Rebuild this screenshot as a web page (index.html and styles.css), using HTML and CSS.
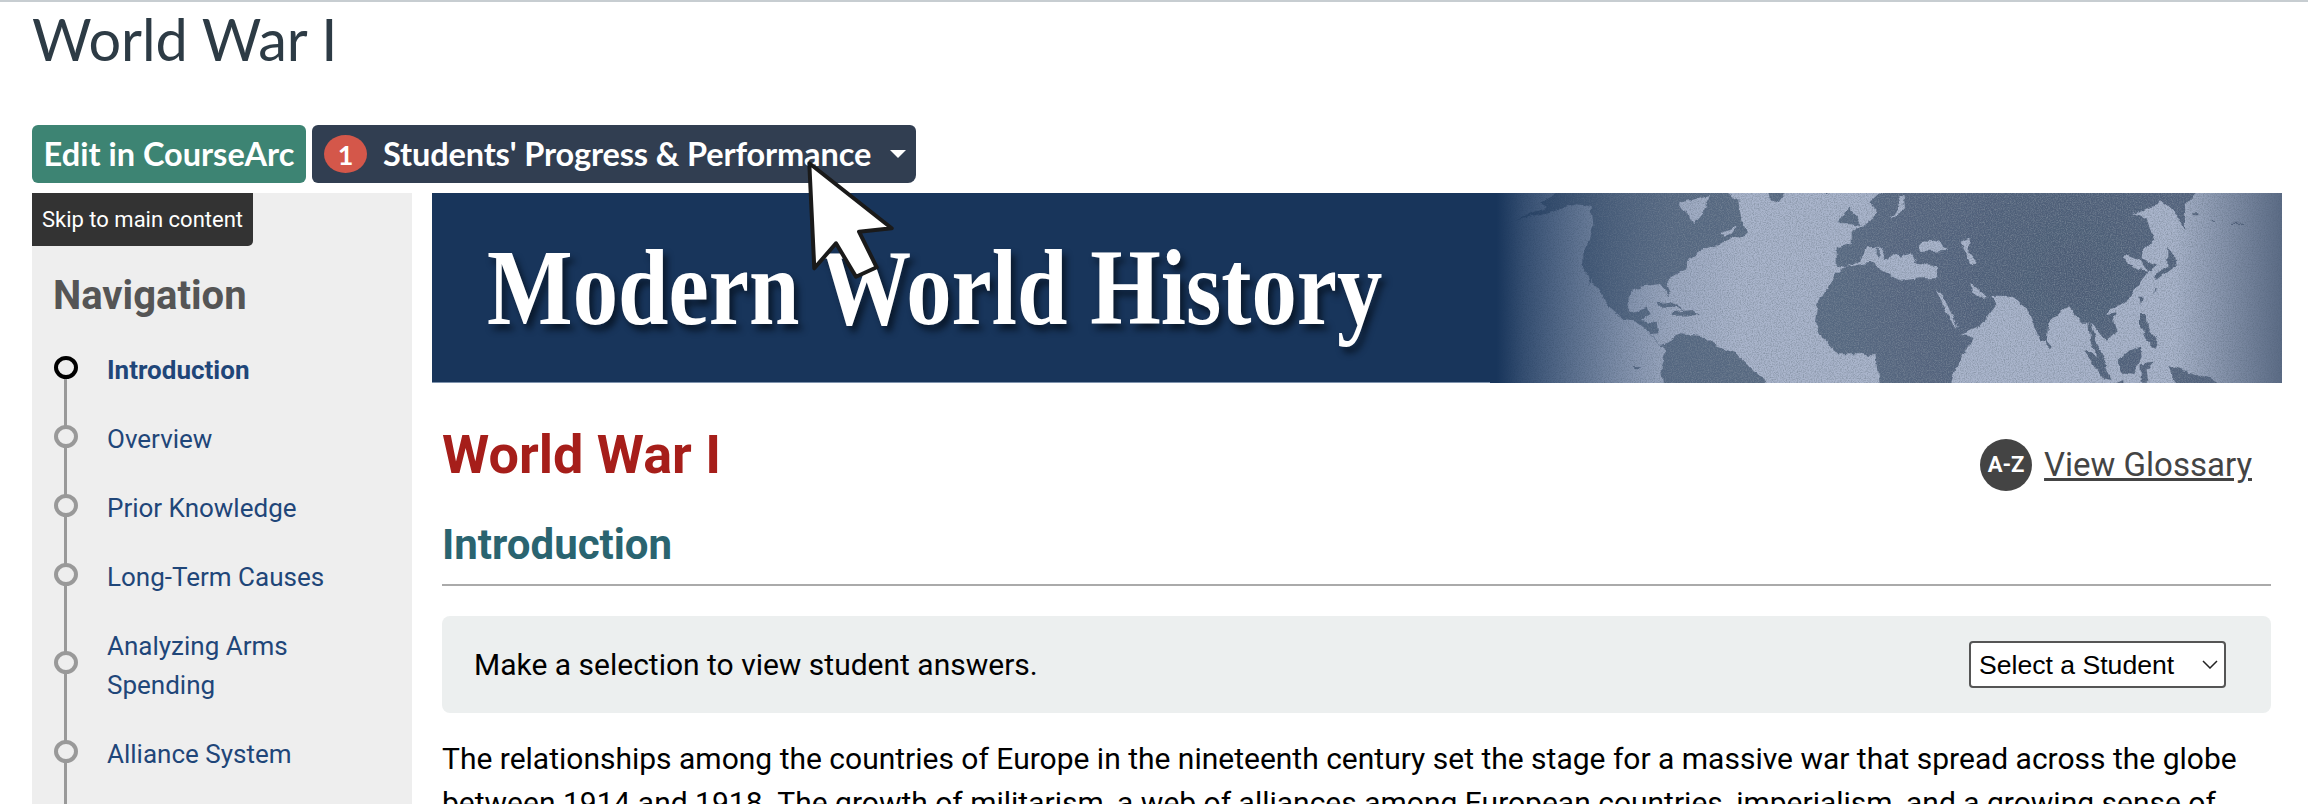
FILE: index.html
```html
<!DOCTYPE html>
<html lang="en">
<head>
<meta charset="utf-8">
<title>World War I</title>
<link rel="stylesheet" href="styles.css">
</head>
<body>
<div class="page">
  <h1 class="page-title">World War I</h1>
  <div class="actions">
    <a class="btn btn-edit" href="#">Edit in CourseArc</a>
    <a class="btn btn-progress" href="#">
      <span class="badge">1</span>
      <span class="btn-label">Students' Progress &amp; Performance</span>
      <span class="caret"></span>
    </a>
  </div>
  <div class="layout">
    <aside class="sidebar">
      <a class="skip" href="#main">Skip to main content</a>
      <h2 class="nav-title">Navigation</h2>
      <ol class="nav-list">
        <li class="nav-item current"><a href="#">Introduction</a></li>
        <li class="nav-item"><a href="#">Overview</a></li>
        <li class="nav-item"><a href="#">Prior Knowledge</a></li>
        <li class="nav-item"><a href="#">Long-Term Causes</a></li>
        <li class="nav-item"><a href="#">Analyzing Arms Spending</a></li>
        <li class="nav-item"><a href="#">Alliance System</a></li>
        <li class="nav-item nav-more"></li>
      </ol>
    </aside>
    <main class="content" id="main">
      <div class="banner">
        <div class="banner-title">Modern World History</div>
        <svg class="banner-map" viewBox="0 9 2376 570" preserveAspectRatio="none" aria-hidden="true">
          <defs>
            <linearGradient id="fadeLeft" x1="0" x2="1000" y1="0" y2="0" gradientUnits="userSpaceOnUse">
              <stop offset="0.02" stop-color="#18355b" stop-opacity="1"/>
              <stop offset="0.1" stop-color="#18355b" stop-opacity="0.8"/>
              <stop offset="0.3" stop-color="#2b4568" stop-opacity="0.52"/>
              <stop offset="0.55" stop-color="#4a5f80" stop-opacity="0.14"/>
              <stop offset="0.75" stop-color="#4a5f80" stop-opacity="0"/>
            </linearGradient>
            <linearGradient id="fadeRight" x1="2050" x2="2376" y1="0" y2="0" gradientUnits="userSpaceOnUse">
              <stop offset="0" stop-color="#4d5e78" stop-opacity="0"/>
              <stop offset="1" stop-color="#4d5e78" stop-opacity="0.85"/>
            </linearGradient>
            <radialGradient id="landShade" cx="1750" cy="250" r="700" gradientUnits="userSpaceOnUse">
              <stop offset="0" stop-color="#4c5c75"/>
              <stop offset="1" stop-color="#566780"/>
            </radialGradient>
            <filter id="grain" x="0" y="0" width="100%" height="100%">
              <feTurbulence type="fractalNoise" baseFrequency="0.28" numOctaves="2" seed="4"/>
              <feColorMatrix type="matrix" values="0 0 0 0 0.2  0 0 0 0 0.25  0 0 0 0 0.32  1.6 0 0 0 -0.62"/>
            </filter>
            <filter id="rough" x="0" y="0" width="100%" height="100%">
              <feTurbulence type="fractalNoise" baseFrequency="0.035" numOctaves="3" seed="7" result="n"/>
              <feDisplacementMap in="SourceGraphic" in2="n" scale="18" xChannelSelector="R" yChannelSelector="G"/>
            </filter>
          </defs>
          <rect x="0" y="9" width="2376" height="570" fill="#aab5cc"/>
          <g filter="url(#rough)">
          <g fill="url(#landShade)">
            <path d="M75 92L170 50 150 38 200 12 225 0H700L745 30 755 90 772 130 745 142 722 140 720 152 675 167 640 177 600 205 580 240 545 260 530 282 541 318 525 300 510 282 450 290 420 310 412 345 425 367 470 350 482 372 452 390 500 400 505 430 482 432 512 465 545 452 570 430 640 435 680 470 740 490 790 540 845 590H520L512 530 530 480 510 465 470 420 440 395 400 390 350 345 330 300 300 280 280 225 280 190 310 110 305 50 260 40 190 62Z"/>
            <path d="M830 0H890L860 40 840 28Z"/>
            <path d="M990 0H1030L1010 14Z"/>
            <path d="M975 400L982 345 1030 262 1052 238 1062 232 1040 222 1040 172 1085 162 1085 128 1135 95 1150 85 1165 62 1140 35 1165 12 1200 0H2125L2085 45 2085 120 2060 75 2035 50 2010 30 2000 45 1930 70 1970 85 1990 150 1960 180 1955 205 2000 225 1975 245 1950 210 1915 195 1895 205 1945 240 1975 245 1945 290 1920 325 1890 345 1855 355 1850 375 1880 370 1870 395 1880 430 1850 455 1820 420 1800 400 1825 470 1855 530 1835 535 1800 450 1795 395 1770 395 1735 345 1675 395 1670 455 1650 450 1610 355 1560 320 1500 320 1520 345 1470 410 1412 435 1450 440 1395 540 1380 590H1170L1160 500 1120 490 1040 490 1000 450Z"/>
            <path d="M1045 100L1075 50 1095 70 1115 105 1080 100Z"/>
            <path d="M1668 450L1685 470 1680 478 1668 465Z"/>
            <path d="M1880 515L1920 480 1950 470 1955 500 1930 555 1900 550Z"/>
            <path d="M1780 480L1820 495 1865 570 1840 565Z"/>
            <path d="M1855 590L1900 570V590Z"/>
            <path d="M1950 375L1970 375 1975 420 2005 460 2000 480 1970 450 1950 410Z"/>
            <path d="M1955 520L1990 515 1970 540 1975 575 1955 575Z"/>
            <path d="M2035 525L2080 540 2160 565 2200 590H2060Z"/>
            <path d="M1945 320L1955 320 1950 345Z"/>
            <path d="M2035 170L2052 195 2058 232 2000 270 1990 255 2035 230Z"/>
            <path d="M1995 295L2001 295 1993 310Z"/>
            <path d="M2105 70H2125L2125 76 2110 76ZM2165 92H2172V96H2165ZM2220 98H2262V102H2220Z"/>
            <path d="M500 340L540 335 585 365 540 350 505 350Z"/>
            <path d="M545 370L610 362 630 375 545 378Z"/>
            <path d="M435 525L450 526 445 532 436 532Z"/>
          </g>
          <g fill="#aab5cc">
            <path d="M565 40L660 15 640 70 610 105 590 65 565 50Z"/>
            <path d="M695 125L740 110 728 128 700 140Z"/>
            <path d="M305 270L330 335 315 330 300 290Z"/>
            <path d="M1065 233L1110 212 1130 172 1170 170 1190 205 1215 195 1235 200 1260 190 1280 222 1340 225 1342 265 1290 265 1235 272 1200 255 1140 218 1100 225Z"/>
            <path d="M1288 170L1305 148 1340 155 1375 182 1330 185 1295 185Z"/>
            <path d="M1412 155L1440 142 1435 185 1462 218 1440 220 1428 190 1415 165Z"/>
            <path d="M1438 280L1450 285 1490 320 1470 325 1445 305Z"/>
            <path d="M1338 298L1360 320 1405 415 1380 385 1355 345Z"/>
            <path d="M1200 80L1215 70 1230 40 1225 15 1240 15 1245 55 1230 70 1205 82Z"/>
            <path d="M970 292L1005 285 985 300Z"/>
          </g>
          <path fill="#5b6c85" d="M1160 172L1170 175 1168 205 1160 200Z"/>
          </g>
          <rect x="0" y="9" width="2376" height="570" filter="url(#grain)"/>
          <rect x="0" y="9" width="2376" height="570" fill="url(#fadeRight)"/>
          <rect x="0" y="9" width="1000" height="570" fill="url(#fadeLeft)"/>
        </svg>
      </div>
      <div class="article">
        <div class="article-head">
          <h1 class="article-title">World War I</h1>
          <a class="glossary" href="#"><span class="glossary-icon">A-Z</span><span class="glossary-text">View Glossary</span></a>
        </div>
        <h2 class="section-title">Introduction</h2>
        <div class="selector">
          <span>Make a selection to view student answers.</span>
          <div class="select-wrap">
            <select class="student-select"><option>Select a Student</option></select>
            <svg class="select-arrow" viewBox="0 0 16 9" aria-hidden="true"><path d="M1 1l7 7 7-7"/></svg>
          </div>
        </div>
        <p class="body-text">The relationships among the countries of Europe in the nineteenth century set the stage for a massive war that spread across the globe between 1914 and 1918. The growth of militarism, a web of alliances among European countries, imperialism, and a growing sense of</p>
      </div>
    </main>
  </div>
</div>
<svg class="cursor" viewBox="0 0 100 130" aria-hidden="true">
  <path d="M9.3 5.3L91.7 70.3 59 73.7 76.7 109.3 56 118.7 36 85.3 14.3 110.3Z"/>
</svg>
</body>
</html>
```

FILE: styles.css
```css
* { box-sizing: border-box; }
html, body { margin: 0; height: 804px; overflow: hidden; background: #fff; }
body { border-top: 2px solid #c7cdd1; font-family: Roboto, sans-serif; color: #000; position: relative; }
a { text-decoration: none; }

.page { padding: 0 26px 0 32px; }
.page-title {
  margin: 0 0 53px;
  padding-top: 4px;
  font: 400 57.6px/66px Lato, sans-serif;
  color: #2d3b45;
}
.actions { display: flex; gap: 6px; height: 58px; }
.btn {
  display: flex;
  align-items: center;
  border-radius: 6px;
  color: #fff;
  font: 700 32.5px/1 Lato, sans-serif;
}
.btn-edit { width: 274px; justify-content: center; background: #3d8473; }
.btn-progress { width: 604px; padding: 0 10px 0 12px; background: #313e51; border-bottom-right-radius: 8px; }
.badge {
  display: flex;
  align-items: center;
  justify-content: center;
  width: 43px;
  height: 38px;
  border-radius: 50%;
  background: #d4574a;
  font-size: 27px;
}
.btn-label { margin-left: 16px; letter-spacing: -0.13px; }
.caret {
  margin-left: auto;
  width: 0;
  height: 0;
  border-style: solid;
  border-width: 8px 8px 0;
  border-color: #fff transparent transparent;
}

.layout { display: flex; gap: 20px; margin-top: 10px; }
.sidebar { flex: 0 0 380px; height: 620px; background: #eee; }
.skip {
  display: block;
  width: 221px;
  height: 53px;
  padding-left: 10px;
  background: #333;
  border-bottom-right-radius: 5px;
  color: #fff;
  font: 400 22px/53px Roboto, sans-serif;
}
.nav-title {
  margin: 28px 0 0 21px;
  font: 700 40px/44px Roboto, sans-serif;
  color: #555;
}
.nav-list { list-style: none; margin: 18px 0 0; padding: 0 20px 0 75px; }
.nav-item { position: relative; padding: 15px 0; }
.nav-item a { font: 400 26px/39px Roboto, sans-serif; color: #1f4679; display: block; }
.nav-item.current a { font-weight: 700; }
.nav-more { height: 69px; }
.nav-item::before {
  content: "";
  box-sizing: border-box;
  position: absolute;
  z-index: 1;
  left: -53px;
  top: 50%;
  width: 24px;
  height: 23px;
  margin-top: -15px;
  border: 4.5px solid #999;
  border-radius: 50%;
  background: #eee;
}
.nav-item::after {
  content: "";
  position: absolute;
  left: -43px;
  top: 0;
  bottom: 0;
  width: 3px;
  background: #999;
}
.nav-item.current::before { border-color: #000; }
.nav-item.current::after { top: 50%; }

.content { flex: 1; min-width: 0; }
.banner {
  display: flex;
  height: 190px;
  background: linear-gradient(#18355b 189px, #7f93ad 189px);
  overflow: hidden;
}
.banner-title {
  flex: 0 0 950px;
  min-width: 0;
  margin: 30px 0 0 55px;
  font: 700 108px/1.2 "Liberation Serif", serif;
  color: #fff;
  white-space: nowrap;
  text-shadow: 5px 6px 7px rgba(6, 16, 30, 0.75);
  transform: scaleX(0.84);
  transform-origin: left top;
}
.banner-map { margin-left: auto; width: 792px; height: 190px; flex: none; display: block; }

.article { padding: 0 11px 0 10px; }
.article-head { display: flex; justify-content: space-between; align-items: flex-start; padding-top: 40px; }
.article-title { margin: 0; font: 700 54px/64px Roboto, sans-serif; color: #a61e1a; }
.glossary { display: flex; align-items: center; gap: 12px; margin: 16px 19px 0 0; color: #444; }
.glossary-icon {
  display: flex;
  align-items: center;
  justify-content: center;
  width: 52px;
  height: 52px;
  border-radius: 50%;
  background: #444;
  color: #fff;
  font: 700 22px/1 Roboto, sans-serif;
}
.glossary-text { font: 400 33px/40px Roboto, sans-serif; text-decoration: underline; }
.section-title {
  margin: 30px 0 0;
  padding-bottom: 15px;
  border-bottom: 2px solid #aaa;
  font: 700 42px/48px Roboto, sans-serif;
  color: #2a6470;
}
.selector {
  display: flex;
  align-items: center;
  justify-content: space-between;
  height: 97px;
  margin-top: 30px;
  padding: 0 45px 0 32px;
  border-radius: 8px;
  background: #ecefef;
  font: 400 30px/1.3 Roboto, sans-serif;
}
.select-wrap { position: relative; width: 257px; height: 47px; }
.student-select {
  appearance: none;
  display: block;
  width: 100%;
  height: 100%;
  padding: 0 0 0 8px;
  border: 2px solid #555;
  border-radius: 4px;
  background-color: #fff;
  color: #000;
  font: 400 26.6px "Liberation Sans", sans-serif;
}
.select-arrow {
  position: absolute;
  right: 8px;
  top: 19px;
  width: 16px;
  height: 9px;
  pointer-events: none;
}
.select-arrow path { fill: none; stroke: #222; stroke-width: 1.5; }
.body-text { margin: 24px 0 0; font: 400 30px/44px Roboto, sans-serif; }

.cursor {
  position: absolute;
  left: 800px;
  top: 156px;
  width: 100px;
  height: 130px;
  overflow: visible;
}
.cursor path { fill: #fff; stroke: #1a1a1a; stroke-width: 4; stroke-linejoin: round; }
```
